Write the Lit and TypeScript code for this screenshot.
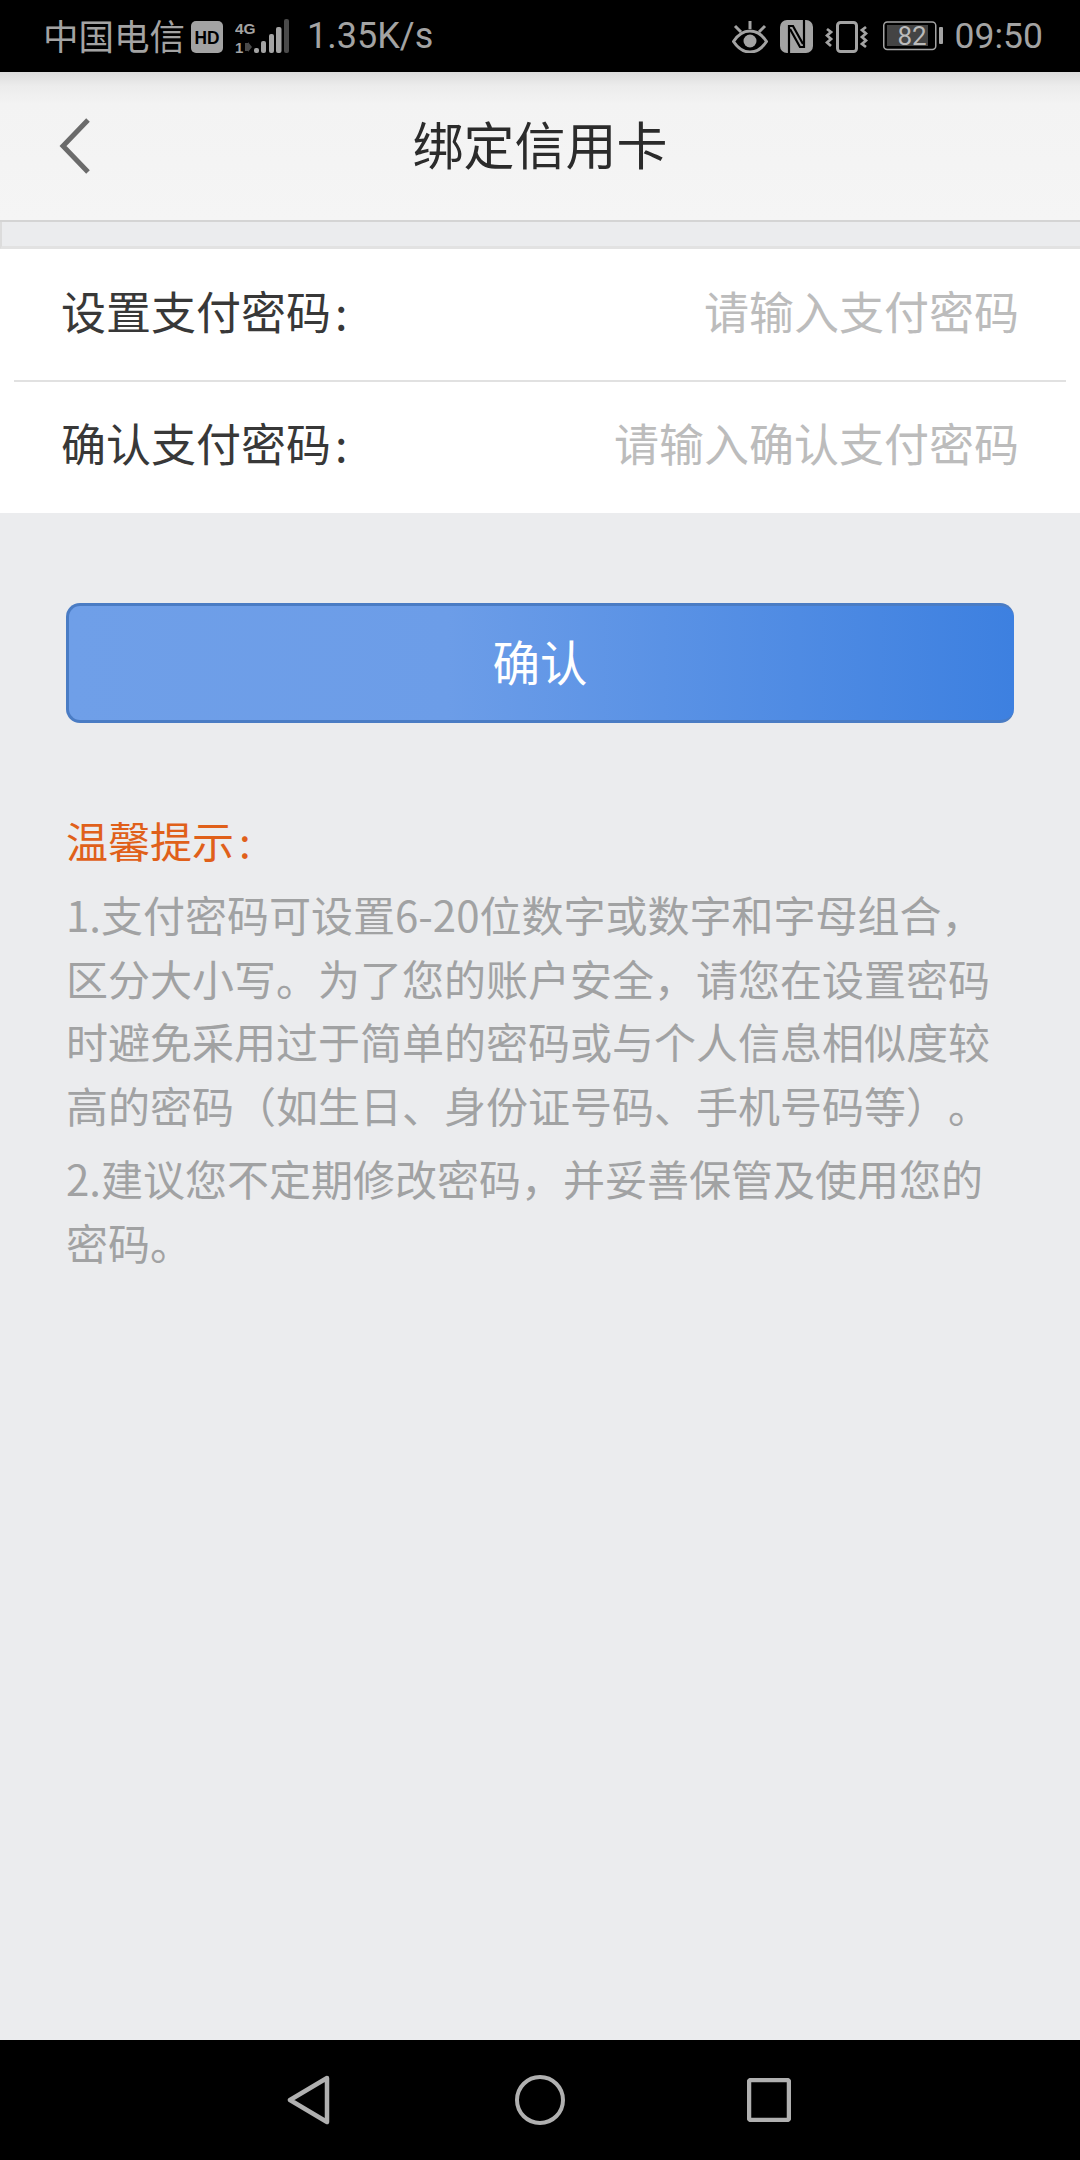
import { LitElement, html, css } from "lit";
import { customElement } from "lit/decorators.js";

@customElement("app-root")
export class AppRoot extends LitElement {
  static styles = css`
    :host { display: block; width: 1080px; height: 2160px; background: #ebecee; font-family: "Noto Sans CJK SC", "Noto Sans", sans-serif; overflow: hidden; text-spacing-trim: space-all; text-autospace: no-autospace; }
    .page { display: flex; flex-direction: column; height: 2160px; }
    .status { height: 72px; background: #000; color: #a3a3a3; display: flex; align-items: center; justify-content: space-between; padding: 0 37px 0 43px; flex: none; box-sizing: border-box; }
    .side { display: flex; align-items: center; }
    .carrier { font-size: 35.500px; white-space: nowrap; margin-right: 6px; margin-bottom: 3px; }
    .speed { font-family: Roboto, sans-serif; font-size: 36px; margin-left: 18px; }
    .clock { font-family: Roboto, sans-serif; font-size: 35.500px; margin-left: 12px; }
    .hd { margin-top: 1px; }
    .sig { margin-left: 12px; }
    .nfc { margin-left: 12px; }
    .vib { margin-left: 12px; }
    .bat { margin-left: 15px; }
    .header { height: 148px; flex: none; background: linear-gradient(#dcdcdc 0, #ececec 14px, #f3f3f3 32px, #f5f5f5 100%); border-bottom: 2px solid #d4d4d4; display: grid; grid-template-columns: 1fr auto 1fr; align-items: center; }
    .back { margin-left: 58px; display: block; }
    .title { font-size: 51px; line-height: 142px; padding-bottom: 6px; color: #2b2b2b; }
    .strip { height: 27px; flex: none; background: #ebecee; border-left: 2px solid #dcdcdc; border-bottom: 3px solid #e2e2e2; box-sizing: border-box; }
    .form { background: #fff; flex: none; height: 264px; display: flex; flex-direction: column; }
    .row { height: 131px; box-sizing: border-box; flex: none; display: flex; align-items: center; justify-content: space-between; padding: 0 61px 8px 61px; font-size: 45px; }
    .row.second { padding-bottom: 10px; }
    .sep { height: 2px; margin: 0 14px; background: #e1e1e1; flex: none; }
    .label { color: #383838; }
    .colon { margin-left: 4px; }
    .ph { color: #bcbcbc; }
    .btn { margin: 90px 66px 0; height: 120px; flex: none; box-sizing: border-box; border-radius: 14px; background: linear-gradient(90deg, #6f9fe8 0%, #6c9de8 40%, #3d80e0 100%); border: solid #4a7cc4; border-width: 3px 0 3px 3px; color: #fff; font-size: 47.500px; padding: 0 3px 5px 0; display: flex; align-items: center; justify-content: center; }
    .tips { margin: 0 66px; padding-top: 85px; flex: 1; font-size: 42px; line-height: 63.500px; color: #a1a2a3; }
    .tips p { margin: 0; }
    .tip-head { color: #e0601a; line-height: 64px; margin-bottom: 10px !important; }
    .tip-colon { margin-left: 5px; }
    .gap { margin-top: 10px !important; }
    .nav { height: 120px; flex: none; background: #000; display: flex; align-items: center; justify-content: center; padding-right: 2px; }
    .nav svg { display: block; }
    .tri { margin-right: 184px; }
    .circ { margin-right: 182px; }
  `;

  render() {
    return html`<div class="page">
      <div class="status">
        <div class="side">
          <span class="carrier">中国电信</span>
          <svg class="hd" width="32" height="32" viewBox="0 0 32 32"><rect width="32" height="32" rx="5" fill="#a3a3a3"/><text x="16" y="23" text-anchor="middle" font-family="Liberation Sans" font-weight="700" font-size="19" textLength="25" lengthAdjust="spacingAndGlyphs" fill="#000">HD</text></svg>
          <svg class="sig" width="54" height="35" viewBox="0 0 54 35">
            <text x="0" y="15" font-family="Liberation Sans" font-weight="700" font-size="15.500" fill="#a3a3a3">4G</text>
            <text x="0" y="34" font-family="Liberation Sans" font-weight="700" font-size="15" fill="#a3a3a3">1</text>
            <path d="M10 24h3v-1l4 5-4 5v-1h-3z" fill="#4a4a4a"/>
            <rect x="19" y="29" width="5" height="5" rx="2" fill="#a3a3a3"/><rect x="26" y="22" width="5" height="12" rx="2" fill="#a3a3a3"/><rect x="34" y="15" width="5" height="19" rx="2" fill="#a3a3a3"/><rect x="41" y="8" width="5.500" height="26" rx="2" fill="#a3a3a3"/><rect x="49" y="0" width="5" height="34" rx="2" fill="#4a4a4a"/>
          </svg>
          <span class="speed">1.35K/s</span>
        </div>
        <div class="side">
          <svg width="36" height="33" viewBox="0 0 36 33"><path d="M1.500 21.500C6 14.500 11 11 18 11s12 3.500 16.500 10.500C30 28.500 25 32 18 32S6 28.500 1.500 21.500z" fill="none" stroke="#a3a3a3" stroke-width="3"/><circle cx="18" cy="21" r="6.500" fill="#a3a3a3"/><path d="M18 1v8M3 6l6 6M33 6l-6 6" stroke="#a3a3a3" stroke-width="3"/></svg>
          <svg class="nfc" width="33" height="33" viewBox="0 0 33 33"><rect width="33" height="33" rx="7" fill="#a3a3a3"/><path d="M9 33V6h4l10 18" fill="none" stroke="#000" stroke-width="2.200"/><path d="M24 0v27h-4L10 9" fill="none" stroke="#000" stroke-width="2.200"/></svg>
          <svg class="vib" width="43" height="33" viewBox="0 0 43 33"><rect x="12.500" y="2.500" width="19" height="29" rx="3" fill="none" stroke="#a3a3a3" stroke-width="3"/><path d="M2 9l4 3-4 3.500 4 3.500-4 3.500 4 3.500M41 7l-4 3 4 3.500-4 3.500 4 3.500-4 3.500 4 3" fill="none" stroke="#a3a3a3" stroke-width="2.800"/></svg>
          <svg class="bat" width="60" height="30" viewBox="0 0 60 30"><rect x="0.750" y="1" width="52" height="27.500" rx="3.500" fill="none" stroke="#a3a3a3" stroke-width="1.500"/><rect x="4" y="4" width="41" height="21" fill="#444"/><rect x="56" y="6" width="4" height="17" rx="1" fill="#a3a3a3"/><text x="29" y="24" text-anchor="middle" font-family="Roboto" font-size="26" fill="#bbb">82</text></svg>
          <span class="clock">09:50</span>
        </div>
      </div>
      <div class="header">
        <svg class="back" width="34" height="58" viewBox="0 0 34 58"><path d="M30 3L5 29l25 26" fill="none" stroke="#6b6b6b" stroke-width="5"/></svg>
        <div class="title">绑定信用卡</div>
        <div></div>
      </div>
      <div class="strip"></div>
      <div class="form">
        <div class="row"><span class="label">设置支付密码<span class="colon">:</span></span><span class="ph">请输入支付密码</span></div>
        <div class="sep"></div>
        <div class="row second"><span class="label">确认支付密码<span class="colon">:</span></span><span class="ph">请输入确认支付密码</span></div>
      </div>
      <div class="btn">确认</div>
      <div class="tips">
        <p class="tip-head">温馨提示<span class="tip-colon">:</span></p>
        <p>1.支付密码可设置6-20位数字或数字和字母组合，<br>区分大小写。为了您的账户安全，请您在设置密码<br>时避免采用过于简单的密码或与个人信息相似度较<br>高的密码（如生日、身份证号码、手机号码等）。</p>
        <p class="gap">2.建议您不定期修改密码，并妥善保管及使用您的<br>密码。</p>
      </div>
      <div class="nav">
        <svg class="tri" width="44" height="50" viewBox="0 0 44 50"><path d="M40 3L3 25l37 22z" fill="none" stroke="#b0b0b0" stroke-width="4.500" stroke-linejoin="round"/></svg>
        <svg class="circ" width="50" height="50" viewBox="0 0 50 50"><circle cx="25" cy="25" r="23" fill="none" stroke="#b0b0b0" stroke-width="4"/></svg>
        <svg width="44" height="44" viewBox="0 0 44 44"><rect x="2" y="2" width="40" height="40" rx="2" fill="none" stroke="#b0b0b0" stroke-width="4.500"/></svg>
      </div>
    </div>`;
  }
}
